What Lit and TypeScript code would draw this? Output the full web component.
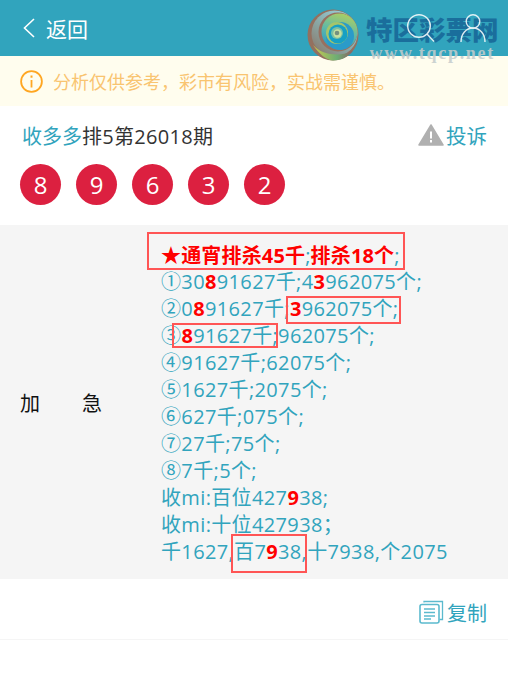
import { LitElement, html, css } from "lit";
import { customElement } from "lit/decorators.js";

const R = (s: string) => html`<b class="r">${s}</b>`;

@customElement("app-root")
export class AppRoot extends LitElement {
  static styles = css`
    :host { display: block; position: relative; width: 508px; height: 689px; overflow: hidden; background: #fff;
      font-family: "Open Sans", "Noto Sans CJK SC", sans-serif; font-size: 20px; color: #333; }
    .top { height: 56px; background: #31a4bd; display: flex; align-items: center; padding: 0 22px 0 23px; gap: 11px; color: #fff; font-size: 21px; box-sizing: border-box; }
    .top .sp { flex: 1; }
    .top svg.b { display: block; }
    .ic { display: flex; gap: 25px; position: relative; z-index: 2; opacity: .85; }
    .notice { height: 50px; background: #fffdee; display: flex; align-items: center; gap: 10px; padding: 0 20px; font-size: 18px; color: #f9c470; }
    .notice svg { flex: none; }
    .head { height: 58px; display: flex; align-items: center; justify-content: space-between; padding: 0 21px 0 22px; }
    .head .l { color: #333; letter-spacing: 0.3px; }
    .t { color: #31a4bd; letter-spacing: 0; }
    .comp { display: flex; align-items: center; gap: 2px; color: #31a4bd; font-size: 20.500px; }
    .balls { display: flex; gap: 15px; padding: 0 20px; height: 61px; }
    .ball { width: 41px; height: 41px; border-radius: 50%; background: #dc2040; color: #fff; display: flex; align-items: center; justify-content: center; font-size: 24px; }
    .row { background: #f5f5f5; height: 354px; display: flex; align-items: center; }
    .lab { width: 82px; margin: 0 59px 0 20px; display: flex; justify-content: space-between; color: #111; }
    .txt { color: #31a4bd; line-height: 26.9px; white-space: nowrap; padding-top: 4px; letter-spacing: 0.36px; }
    .first { letter-spacing: 0.16px; }
    .r { color: #f00; font-weight: 700; }
    .copy { height: 61px; border-bottom: 1px solid #f5f5f5; display: flex; align-items: center; justify-content: flex-end; gap: 3px; padding: 6px 21px 0 0; box-sizing: border-box; color: #31a4bd; font-size: 20px; }
    .box { position: absolute; border: 2px solid #f55; box-sizing: border-box; }
    .mark { position: absolute; left: 307px; top: 9px; display: flex; gap: 7px; pointer-events: none; }
    .mark .w { display: flex; flex-direction: column; align-items: center; }
    .cn { font-size: 26.500px; line-height: 30px; margin-top: 5px; font-weight: 900; color: #1a6e9c; letter-spacing: 0; font-family: "Noto Sans CJK SC", sans-serif; white-space: nowrap; }
    .en { font-family: "Liberation Serif", serif; font-size: 18px; line-height: 18px; font-weight: 700; color: #c4cccc; letter-spacing: 1.700px; opacity: .85; white-space: nowrap; }
  `;

  render() {
    return html`
      <div class="top">
        <svg class="b" width="12" height="20" viewBox="0 0 12 20" fill="none" stroke="#fff" stroke-width="1.6"><path d="M11 1 1.500 10 11 19"/></svg>
        <span>返回</span>
        <span class="sp"></span>
        <div class="ic">
          <svg width="28" height="28" viewBox="0 0 28 28" fill="none" stroke="#fff" stroke-width="1.4"><circle cx="12" cy="12" r="11.300"/><path d="m20 20 7 7.500"/></svg>
          <svg width="26" height="28" viewBox="0 0 26 28" fill="none" stroke="#fff" stroke-width="1.4"><circle cx="13" cy="7.500" r="6.800"/><path d="M1 28c0-8 5-14 12-14s12 6 12 14"/></svg>
        </div>
      </div>
      <div class="notice">
        <svg width="23" height="23" viewBox="0 0 23 23" fill="none" stroke="#ffa621" stroke-width="1.8"><circle cx="11.500" cy="11.500" r="10.400"/><path d="M11.500 10v7.500"/><path d="M11.500 5.500v2.200" stroke-width="2"/></svg>
        <span>分析仅供参考，彩市有风险，实战需谨慎。</span>
      </div>
      <div class="head">
        <span class="l"><span class="t">收多多</span>排5第26018期</span>
        <span class="comp">
          <svg width="26" height="22" viewBox="0 0 26 22"><path fill="#b0b0b0" d="M13 1 25 21H1Z" stroke="#b0b0b0" stroke-width="1.500" stroke-linejoin="round"/><path stroke="#fff" stroke-width="2" d="M13 7.500v7M13 16v2.500"/></svg>
          投诉
        </span>
      </div>
      <div class="balls">
        ${[8, 9, 6, 3, 2].map((n) => html`<div class="ball">${n}</div>`)}
      </div>
      <div class="row">
        <div class="lab"><span>加</span><span>急</span></div>
        <div class="txt">
          <span class="first"><span class="r">★通宵排杀45千</span><span>;</span><span class="r">排杀18个</span>;</span><br />
          ①30${R("8")}91627千;4${R("3")}962075个;<br />
          ②0${R("8")}91627千;${R("3")}962075个;<br />
          ③${R("8")}91627千;962075个;<br />
          ④91627千;62075个;<br />
          ⑤1627千;2075个;<br />
          ⑥627千;075个;<br />
          ⑦27千;75个;<br />
          ⑧7千;5个;<br />
          收mi:百位427${R("9")}38;<br />
          收mi:十位427938；<br />
          千1627,百7${R("9")}38,十7938,个2075
        </div>
      </div>
      <div class="copy">
        <svg width="25" height="24" viewBox="0 0 25 24" fill="none" stroke="#5bbace" stroke-width="1.300"><path d="M5 2.500V1.500h18.500v18h-3"/><rect x="1" y="4.500" width="19" height="18.500" rx="2" stroke-width="1.600"/><path d="M5 9h11M5 12.500h11M5 16h11M5 19h7" stroke-width="1.500"/></svg>
        <span>复制</span>
      </div>

      <div class="box" style="left:147px;top:232px;width:258px;height:38px"></div>
      <div class="box" style="left:286px;top:296px;width:115px;height:28px"></div>
      <div class="box" style="left:172px;top:323px;width:106px;height:25px"></div>
      <div class="box" style="left:231px;top:534px;width:76px;height:39px"></div>

      <div class="mark">
        <svg width="52" height="52" viewBox="0 0 52 52">
          <defs>
            <linearGradient id="a" x1="0.800" y1="0" x2="0.100" y2="0.800"><stop offset="0" stop-color="#9cd3df"/><stop offset=".5" stop-color="#8ab0b0"/><stop offset="1" stop-color="#8a8378"/></linearGradient>
            <linearGradient id="b" x1="0.800" y1="0" x2="0.500" y2="1"><stop offset="0" stop-color="#b3d05c"/><stop offset=".55" stop-color="#5fb9a8"/><stop offset="1" stop-color="#2a9bc9"/></linearGradient>
            <linearGradient id="c" x1="0" y1="0" x2="1" y2="0"><stop offset="0" stop-color="#c9c94e"/><stop offset=".6" stop-color="#6dae74"/><stop offset="1" stop-color="#8d5f63"/></linearGradient>
          </defs>
          <circle cx="26" cy="26" r="25.500" fill="#93705f"/>
          <circle cx="27.500" cy="24.500" r="23" fill="url(#a)"/>
          <path d="M6 36c6 9 14 15.500 20 15.500 9 0 16-4 20-10-10 6-30 6-40-5.500Z" fill="url(#c)"/>
          <circle cx="31" cy="23" r="19.500" fill="#98705f"/>
          <circle cx="32.500" cy="22.500" r="18" fill="url(#b)"/>
          <circle cx="33" cy="27" r="14" fill="#2a9bc9"/>
          <circle cx="30" cy="24" r="11" fill="#a5c56a"/>
          <circle cx="31" cy="25" r="9.500" fill="#17a0c4"/>
          <circle cx="30" cy="24" r="6" fill="#7bc0a4"/>
          <circle cx="30.500" cy="24.500" r="4.200" fill="#c8e0a0"/>
          <circle cx="30" cy="24" r="2.300" fill="#74907f"/>
        </svg>
        <div class="w">
          <div class="cn">特区彩票网</div>
          <div class="en">www.tqcp.net</div>
        </div>
      </div>
    `;
  }
}
